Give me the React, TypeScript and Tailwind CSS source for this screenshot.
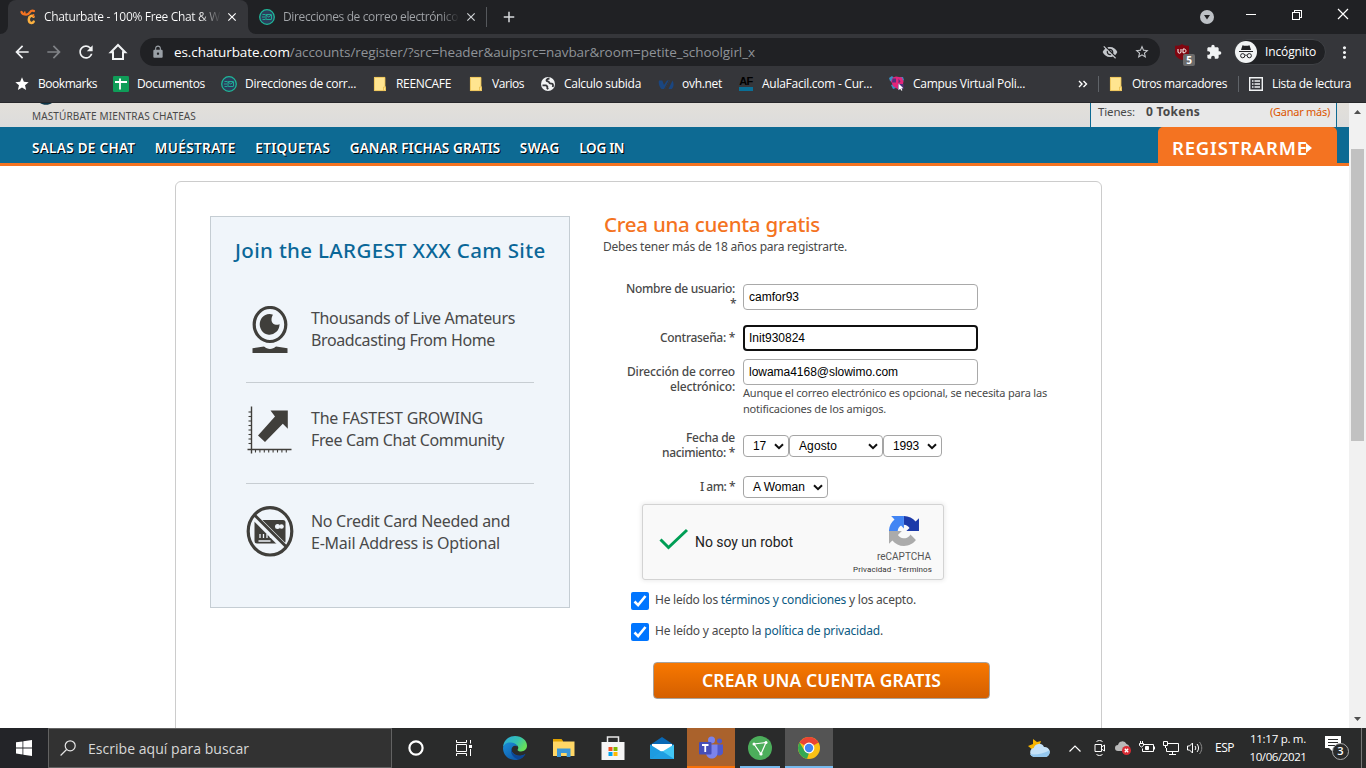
import { useLayoutEffect, useRef, useState, type ReactNode } from "react";
import {
  MdArrowBack,
  MdArrowForward,
  MdRefresh,
  MdLock,
  MdStar,
  MdStarBorder,
  MdExtension,
  MdMoreVert,
  MdVisibilityOff,
  MdClose,
  MdAdd,
} from "react-icons/md";

/* Single line of text whose tracking is adjusted so that it spans w pixels. */
function Fit({ w, className = "", children }: { w: number; className?: string; children: ReactNode }) {
  const ref = useRef<HTMLSpanElement>(null);
  const [spacing, setSpacing] = useState(0);
  useLayoutEffect(() => {
    const el = ref.current;
    if (!el) return;
    const natural = el.getBoundingClientRect().width;
    const count = (el.textContent || "").length;
    setSpacing((w - natural) / Math.max(count, 1));
  }, [w]);
  return (
    <span ref={ref} className={`inline-block shrink-0 whitespace-nowrap ${className}`} style={{ letterSpacing: `${spacing}px` }}>
      {children}
    </span>
  );
}

const UI = "font-['Open_Sans','Noto_Sans',sans-serif]";
const UB = "font-['Noto_Sans','Open_Sans',sans-serif]";

/* ---------- small drawings ---------- */

function MailLogo() {
  return (
    <svg className="block size-4 shrink-0" viewBox="0 0 16 16" fill="none">
      <circle cx="8" cy="8" r="7.3" fill="#2b3f5c" stroke="#1fb89a" strokeWidth="1.3" />
      <rect x="7" y="5.500" width="5.500" height="5" rx=".4" stroke="#1fb89a" strokeWidth=".9" />
      <path d="M7 6l2.700 2L12.300 6M3.500 5.500h3M3 8h3M3.500 10.500h3" stroke="#1fb89a" strokeWidth=".9" />
    </svg>
  );
}

function SiteLogo() {
  return (
    <svg className="block size-4 shrink-0" viewBox="0 0 16 16" fill="none">
      <path d="M1.500 3c.8 2.200 2.500 2.600 4.700 2.600C8 5.600 9 4.800 9.800 3.400 11 1.600 12.800 1.300 14 2" stroke="#f47321" strokeWidth="2.200" strokeLinecap="round" />
      <path d="M5 2.600c-.5 1.500-.3 2.500 0 3" stroke="#f47321" strokeWidth="1.600" />
      <path d="M13.500 7.800C12 6 9 6.800 8.800 10.300c-.1 4.200 3.700 4.500 4.900 2.300" stroke="#fbb040" strokeWidth="2.500" strokeLinecap="round" />
      <path d="M13.500 5v3.200" stroke="#f47321" strokeWidth="1.500" />
    </svg>
  );
}

function Folder() {
  return (
    <svg className="block size-4 shrink-0" viewBox="0 0 16 16">
      <path d="M2 1h11v9.500h1V15H2z" fill="#ffe590" />
      <path d="M2.400 15V1.400H13V10.500M11.500 14.600V11h2v3.600H2.500" fill="none" stroke="#e8bd4d" strokeWidth=".8" />
    </svg>
  );
}

function Sheets() {
  return (
    <svg className="block size-4 shrink-0" viewBox="0 0 16 16">
      <rect width="16" height="16" rx="1.200" fill="#0f9d58" />
      <path d="M2 6h12M7 2.500v11" stroke="#fff" strokeWidth="1.800" />
    </svg>
  );
}

function Globe() {
  return (
    <svg className="block size-4 shrink-0" viewBox="0 0 16 16">
      <circle cx="8" cy="8" r="7" fill="#f1f3f4" />
      <path d="M2.500 9.300h3.500l1.300 1.200v1.800l1 .9" fill="none" stroke="#35363a" strokeWidth="1.800" />
      <path d="M9.500 2.500c-2 .2-3.200 1-3 2 .2 1.300 2.500.6 2.700 2 .2 1.200 1.600 1 2.600 1.200 1.400.3 1.500 1.600.9 3.300" fill="none" stroke="#35363a" strokeWidth="1.800" />
    </svg>
  );
}

function Ovh() {
  return (
    <svg className="block size-4 shrink-0" viewBox="0 0 16 16">
      <path d="M1 4.500h3.300L6 9l3-4.500h3L7 13H3.500C1 10 .3 7 1 4.500zM10.500 13l4-8.500C16.300 8 15.700 11 13.800 13z" fill="#1a4680" />
      <path d="M6.500 13l4.600-8.500" stroke="#35363a" />
    </svg>
  );
}

function AulaFacil() {
  return (
    <div className="flex h-4 w-4 shrink-0 flex-col items-center">
      <span className="h-[10px] text-[11px] leading-[10px] font-bold tracking-[-0.5px] text-black font-['Liberation_Sans',sans-serif]">AF</span>
      <div className="mt-px h-1 w-[14px] bg-[#0a6f96]" />
    </div>
  );
}

function Campus() {
  return (
    <svg className="block size-4 shrink-0" viewBox="0 0 16 16">
      <path d="M0 2l3-2 2 2-2 4-2-1zM11 1l3 0 1 3-2 2zM2 9l3-1 2 4-3 1z" fill="#3b8fc4" />
      <path d="M4 1.500l3-1 6 1 1.500 4-1 5-5 2.500-4.500-3L2 5z" fill="#e2257b" />
      <path d="M3.500 2.500h3.500v4H3zM9.500 2.500l2 3-2 2zM9 8h5.500v4.500L9 14z" fill="#54307d" />
      <path d="M9.500 7.500v6.800l1.700-1.500 1.200 2 1-.6-1-2h2z" fill="#fff" />
    </svg>
  );
}

function WebcamIcon() {
  return (
    <svg className="block size-12" viewBox="0 0 48 48">
      <ellipse cx="24" cy="18.500" rx="15.800" ry="17" fill="none" stroke="#403f3b" strokeWidth="3.200" />
      <path d="M27 8.700A9.900 10.300 0 1 0 33.500 18c-2.600 2-7.700.4-8-3.800-.1-2.300.7-4.300 1.500-5.500z" fill="#403f3b" />
      <path d="M6.500 42.300L18 40.600c3.400 3.100 8.600 3.100 12 0l11.500 1.700V47h-35z" fill="#403f3b" />
    </svg>
  );
}

function GrowthIcon() {
  const ticks = [0, 1, 2, 3, 4, 5, 6, 7];
  return (
    <svg className="block size-12" viewBox="0 0 48 48">
      <path d="M5.500.5v47M1.500 43.500h44" stroke="#403f3b" strokeWidth="1.400" />
      {ticks.map((t) => (
        <g key={t} stroke="#403f3b" strokeWidth="1.100">
          <path d={`M2.500 ${6 + t * 4.500}h3`} />
          <path d={`M${9.500 + t * 4.400} 43.500v3`} />
        </g>
      ))}
      <path d="M12 29.500L29 10.500l-4.500-6h17.300v18.300l-5-5L19 36z" fill="#403f3b" />
    </svg>
  );
}

function NoCardIcon() {
  return (
    <svg className="-mt-px block h-[52px] w-12" viewBox="0 0 48 52">
      <rect x="8.500" y="15" width="31" height="23.500" rx="2.500" fill="#403f3b" />
      <circle cx="31.500" cy="21.500" r="2.500" fill="#f0f5fa" />
      <circle cx="35.500" cy="21.500" r="2.300" fill="#f0f5fa" />
      <path d="M14 29v4M17.500 29v4M21 29v4M24.500 31v2M12.500 36h12" stroke="#f0f5fa" strokeWidth="1.300" />
      <path d="M7 10.500l33 33" stroke="#f0f5fa" strokeWidth="6.800" />
      <path d="M8 9.500l32.500 32.500" stroke="#403f3b" strokeWidth="3" />
      <ellipse cx="24" cy="26.300" rx="21.800" ry="23.700" fill="none" stroke="#403f3b" strokeWidth="3.200" />
    </svg>
  );
}

function CaptchaLogo() {
  return (
    <svg className="block size-[30px]" viewBox="0 0 64 64">
      <path d="M64 31.950a33 33 0 0 0-.05-1.370V4.650l-7.170 7.170C50.920 4.640 41.990.05 31.990.05v18.610c4.970.39 9.270 3.130 11.810 7.110l-6.800 6.200z" fill="#1c3aa9" />
      <path d="M31.860.05c-.46.01-.92.02-1.370.05H4.560l7.170 7.170C4.550 13.130-.04 22.060-.04 32.060h18.600c.39-4.970 3.130-9.270 7.110-11.810l6.200 6.200z" fill="#4285f4" />
      <path d="M-.04 32.060c0 .46.020.92.050 1.370v25.930l7.170-7.170c5.860 7.180 14.790 11.770 24.790 11.770 10.400 0 19.640-4.960 25.480-12.640L45.700 39.450a15.570 15.570 0 0 1-4.760 5.340c-2.050 1.600-4.960 2.910-8.970 2.910-.48 0-.86-.06-1.130-.16-4.970-.39-9.270-3.130-11.810-7.110l8.310-8.310-27.380-.06" fill="#ababab" />
    </svg>
  );
}

/* ---------- browser chrome ---------- */

function TabStrip() {
  return (
    <div className="flex h-[34px] items-stretch bg-[#202124]">
      <div className="flex w-2 items-end bg-[#35363a]">
        <div className="h-full w-2 rounded-br-lg bg-[#202124]" />
      </div>
      <div className="flex w-[240px] items-center rounded-t-lg bg-[#35363a] pl-3">
        <SiteLogo />
        <div className="ml-2 flex w-[177px] overflow-hidden bg-linear-to-r from-white from-88% to-transparent bg-clip-text">
          <Fit w={176} className="text-[12px] leading-5 text-transparent">Chaturbate - 100% Free Chat &amp; W</Fit>
        </div>
        <MdClose className="ml-[4px] size-[14px] text-white" />
      </div>
      <div className="w-2 bg-[#35363a]">
        <div className="h-full w-2 rounded-bl-lg bg-[#202124]" />
      </div>
      <div className="flex items-center pl-[3px]">
        <MailLogo />
        <div className="ml-2 flex w-[177px] overflow-hidden bg-linear-to-r from-[#a3a6aa] from-88% to-transparent bg-clip-text">
          <Fit w={175} className="text-[12px] leading-5 text-transparent">Direcciones de correo electrónico</Fit>
        </div>
        <MdClose className="ml-[4px] size-[14px] text-[#d0d3d6]" />
        <div className="ml-[8px] h-5 w-px bg-[#55585c]" />
        <MdAdd className="ml-[13px] size-[18px] text-[#d8dadd]" />
      </div>
      <div className="mr-[8px] ml-auto flex items-center text-white">
        <svg className="mr-[31px] block size-4" viewBox="0 0 16 16">
          <circle cx="8" cy="8" r="7" fill="#bdc1c6" />
          <path d="M5 6h6l-3 4.500z" fill="#202124" />
        </svg>
        <svg className="mb-[6px] block h-[12px] w-[112px]" viewBox="0 0 112 12" fill="none" stroke="#fff" shapeRendering="crispEdges">
          <path d="M0 6.500h10" />
          <path d="M46.500 4.500h7v7h-7zM48.500 4V2.500h7v7H54" />
          <path d="M92 1l10 10M102 1L92 11" shapeRendering="auto" strokeWidth="1.200" />
        </svg>
      </div>
    </div>
  );
}

function Toolbar() {
  return (
    <div className="flex h-9 items-center bg-[#35363a] pl-3">
      <MdArrowBack className="size-5 text-[#f1f3f4]" />
      <MdArrowForward className="ml-3 size-5 text-[#808387]" />
      <MdRefresh className="ml-3 size-5 text-[#f1f3f4]" />
      <svg className="ml-3 block size-5" viewBox="0 0 20 20" fill="none" stroke="#f1f3f4" strokeWidth="2">
        <path d="M2.800 10.300H5V17h10v-6.700h2.200L10 3z" />
      </svg>
      <div className="ml-3 flex h-7 w-[1020px] items-center rounded-full bg-[#202124]">
        <MdLock className="ml-[11px] size-[14px] text-[#9aa0a6]" />
        <Fit w={581} className="ml-[9px] text-[13.500px] text-[#8f9398]">
          <span className="text-white">es.chaturbate.com</span>/accounts/register/?src=header&amp;auipsrc=navbar&amp;room=petite_schoolgirl_x
        </Fit>
        <MdVisibilityOff className="ml-auto size-4 text-[#c4c7cb]" />
        <MdStarBorder className="mr-[10px] ml-[16px] size-4 text-[#c4c7cb]" />
      </div>
      <div className="relative ml-[14px] size-4">
        <svg className="block size-4" viewBox="0 0 16 16">
          <path d="M8 0c2 1.500 4 1.800 7 1.800V9c0 3-3 5.500-7 7-4-1.500-7-4-7-7V1.800C4 1.800 6 1.500 8 0z" fill="#800610" />
          <path d="M4 5v3c0 1.600 3 1.600 3 0V5M9 5v3.800h1c2.600 0 2.600-3.800 0-3.800z" fill="none" stroke="#fff" />
        </svg>
        <span className="absolute top-[10px] left-[9px] flex h-[12px] w-3 items-center justify-center rounded-[2px] bg-[#6b6b6b] text-[10px] font-bold text-white">5</span>
      </div>
      <MdExtension className="ml-4 size-4 text-[#f1f3f4]" />
      <div className="ml-[12px] flex h-[26px] w-[92px] items-center rounded-full border border-[#3f4145] bg-[#202124]">
        <svg className="-ml-px block size-6" viewBox="0 0 24 24">
          <circle cx="12" cy="12" r="11" fill="#f1f3f4" />
          <path d="M8.500 5.200c2 .8 5 .8 7 0L17 10H7zM5 11h14v1H5z" fill="#202124" />
          <path d="M11 15.500c.6-.5 1.400-.5 2 0" stroke="#202124" fill="none" />
          <circle cx="8.700" cy="15.700" r="2.100" fill="none" stroke="#202124" />
          <circle cx="15.300" cy="15.700" r="2.100" fill="none" stroke="#202124" />
        </svg>
        <Fit w={51} className="ml-[7px] text-[12px] text-white">Incógnito</Fit>
      </div>
      <MdMoreVert className="ml-[9px] size-[19px] text-[#f1f3f4]" />
    </div>
  );
}

function Mark({ gap, icon, w, children }: { gap: string; icon: ReactNode; w: number; children: string }) {
  return (
    <div className={`flex shrink-0 items-center ${gap}`}>
      {icon}
      <Fit w={w} className="ml-2 text-[12px] leading-4">{children}</Fit>
    </div>
  );
}

function BookmarksBar() {
  return (
    <div className="flex h-8 items-center bg-[#35363a] pb-1 text-white">
      <Mark gap="ml-[14px]" icon={<MdStar className="size-4" />} w={59}>Bookmarks</Mark>
      <Mark gap="ml-4" icon={<Sheets />} w={68}>Documentos</Mark>
      <Mark gap="ml-4" icon={<MailLogo />} w={111}>Direcciones de corr...</Mark>
      <Mark gap="ml-4" icon={<Folder />} w={55}>REENCAFE</Mark>
      <Mark gap="ml-[17px]" icon={<Folder />} w={32}>Varios</Mark>
      <Mark gap="ml-4" icon={<Globe />} w={77}>Calculo subida</Mark>
      <Mark gap="ml-[17px]" icon={<Ovh />} w={40}>ovh.net</Mark>
      <Mark gap="ml-4" icon={<AulaFacil />} w={110}>AulaFacil.com - Cur...</Mark>
      <Mark gap="ml-[17px]" icon={<Campus />} w={112}>Campus Virtual Poli...</Mark>
      <svg className="ml-auto block h-2 w-[10px]" viewBox="0 0 10 8" fill="none" stroke="#fff" strokeWidth="1.400">
        <path d="M1 1l3 3-3 3M5.500 1l3 3-3 3" />
      </svg>
      <div className="ml-[10px] h-4 w-px bg-[#5f6368]" />
      <Mark gap="ml-[9px]" icon={<Folder />} w={95}>Otros marcadores</Mark>
      <div className="ml-[11px] h-4 w-px bg-[#5f6368]" />
      <Mark
        gap="ml-[9px] mr-[15px]"
        w={79}
        icon={
          <svg className="block size-4" viewBox="0 0 16 16" fill="none" stroke="#f1f3f4">
            <path d="M1.700 1.700h12.600v12.600H1.700z" strokeWidth="1.400" />
            <path d="M4 5h1.500M4 8h1.500M4 11h1.500M6.500 5H12M6.500 8H12M6.500 11H12" strokeWidth="1.500" />
          </svg>
        }
      >
        Lista de lectura
      </Mark>
    </div>
  );
}

/* ---------- page ---------- */

function SiteHeader() {
  return (
    <header>
      <div className="flex h-6 bg-linear-to-b from-[#e3e0da] to-[#dcdcdc] pl-8">
        <div className="flex w-[170px] flex-col items-start">
          <svg className="ml-[6px] block h-[2px] w-4" viewBox="0 0 16 2">
            <path d="M2 0h12c-3 2.400-9 2.400-12 0z" fill="#0c3547" />
          </svg>
          <Fit w={164} className="mt-[2px] text-[10px] leading-[19px] text-[#494949]">MASTÚRBATE MIENTRAS CHATEAS</Fit>
        </div>
        <div className="mr-3 ml-auto flex w-[247px] border-x border-[#0d6a93] bg-[#e8e8e8] pl-[7px] leading-[18px] text-[#494949]">
          <Fit w={37} className="text-[11.500px]">Tienes:</Fit>
          <Fit w={54} className="ml-[11px] text-[12px] font-bold">0 Tokens</Fit>
          <Fit w={60} className="mr-[6px] ml-auto text-[11px] text-[#dc5500]">(Ganar más)</Fit>
        </div>
      </div>
      <div className="flex h-[39px] border-b-3 border-[#f47321] bg-[#0d6a93] pl-8">
        <nav className="flex gap-[19.500px] pt-[11px] text-[13.500px] leading-5 font-semibold text-white [text-shadow:1px_1px_0_#000]">
          <Fit w={103.3}>SALAS DE CHAT</Fit>
          <Fit w={81}>MUÉSTRATE</Fit>
          <Fit w={75}>ETIQUETAS</Fit>
          <Fit w={150.5}>GANAR FICHAS GRATIS</Fit>
          <Fit w={40}>SWAG</Fit>
          <Fit w={45}>LOG IN</Fit>
        </nav>
        <div className="mr-3 ml-auto flex w-[179px] items-center rounded-t-[5px] bg-[#f47321] pt-[6px] pl-[14px] text-white">
          <Fit w={136} className="text-[18.500px] leading-6 font-semibold">REGISTRARME</Fit>
          <svg className="-ml-[2px] block h-[10px] w-[6px]" viewBox="0 0 6 10">
            <path d="M0 0l6 5-6 5z" fill="#fff" />
          </svg>
        </div>
      </div>
    </header>
  );
}

function Feature({ icon, lines, last, className = "" }: { icon: ReactNode; lines: [string, number][]; last?: boolean; className?: string }) {
  return (
    <div className={`flex items-start ${last ? "" : "border-b border-[#c7cdd2]"} ${className}`}>
      {icon}
      <div className={`ml-[17px] flex flex-col text-[16px] leading-[22px] text-[#494949] ${last ? "pt-1" : "pt-px"}`}>
        {lines.map(([text, w]) => (
          <div key={text} className="flex">
            <Fit w={w}>{text}</Fit>
          </div>
        ))}
      </div>
    </div>
  );
}

function Promo() {
  return (
    <aside className="mt-[34px] h-[392px] w-[360px] border border-[#c5cdd3] bg-[#f0f5fa] px-[35px] pt-[19px]">
      <div className="-ml-[11px] flex">
        <Fit w={310.5} className="text-[20.500px] leading-7 font-medium text-[#0a6798]">Join the LARGEST XXX Cam Site</Fit>
      </div>
      <Feature className="mt-[42px] h-[77px]" icon={<WebcamIcon />} lines={[["Thousands of Live Amateurs", 204], ["Broadcasting From Home", 184]]} />
      <Feature className="mt-[23px] h-[78px]" icon={<GrowthIcon />} lines={[["The FASTEST GROWING", 172], ["Free Cam Chat Community", 193]]} />
      <Feature className="mt-[22px]" last icon={<NoCardIcon />} lines={[["No Credit Card Needed and", 199], ["E-Mail Address is Optional", 189]]} />
    </aside>
  );
}

function Label({ lines, className = "" }: { lines: [string, number][]; className?: string }) {
  return (
    <div className={`flex w-[132px] shrink-0 flex-col items-end text-[12px] leading-[15px] font-medium text-[#494949] ${className}`}>
      {lines.map(([text, w]) => (
        <Fit key={text} w={w}>{text}</Fit>
      ))}
    </div>
  );
}

function Field({ value, w, focused }: { value: string; w: number; focused?: boolean }) {
  return (
    <div className={`flex h-[26px] w-[235px] items-center rounded-[4px] bg-white text-[12px] text-black font-['Liberation_Sans',Arial,sans-serif] ${focused ? "border-2 border-[#101010] pl-[4px]" : "border border-[#a9a9a9] pl-[5px]"}`}>
      <Fit w={w}>{value}</Fit>
    </div>
  );
}

function Picker({ value, w, className }: { value: string; w: number; className: string }) {
  return (
    <div className={`flex h-[22px] items-center rounded-[4px] border border-[#a5a5a5] bg-white pr-1 pl-[9px] text-[12px] text-black font-['Liberation_Sans',Arial,sans-serif] ${className}`}>
      <Fit w={w}>{value}</Fit>
      <svg className="ml-auto block h-[7px] w-[10px]" viewBox="0 0 10 7">
        <path d="M1 1.200l4 4 4-4" fill="none" stroke="#101010" strokeWidth="2" />
      </svg>
    </div>
  );
}

function Check({ className, w, children }: { className: string; w: number; children: ReactNode }) {
  return (
    <div className={`ml-7 flex h-[18px] items-start ${className}`}>
      <svg className="block size-[18px]" viewBox="0 0 18 18">
        <rect width="18" height="18" rx="2" fill="#0075ff" />
        <path d="M3.500 9.500l3.600 3.600L14.500 4" fill="none" stroke="#fff" strokeWidth="2.600" />
      </svg>
      <Fit w={w} className="ml-[6px] text-[12px] leading-4 text-[#494949]">{children}</Fit>
    </div>
  );
}

function Captcha() {
  return (
    <div className="mt-[6px] ml-[39px] flex h-[76px] w-[302px] rounded-[3px] border border-[#d3d3d3] bg-[#f9f9f9] shadow-[0_0_4px_1px_rgba(0,0,0,0.08)] font-['Roboto',sans-serif]">
      <svg className="mt-[23px] ml-[16px] block h-[22px] w-[30px]" viewBox="0 0 30 22">
        <path d="M1.500 11.500l8 8L28 2" fill="none" stroke="#009e55" strokeWidth="3" />
      </svg>
      <Fit w={98} className="ml-[6px] self-center text-[14px] text-[#222]">No soy un robot</Fit>
      <div className="mr-3 ml-auto flex flex-col items-end pt-[11px] text-[#555]">
        <div className="mr-3">
          <CaptchaLogo />
        </div>
        <Fit w={54} className="mt-[5px] text-[10px] leading-3">reCAPTCHA</Fit>
        <Fit w={79} className="mt-[2px] -mr-px text-[8px] leading-[10px] text-[#333]">Privacidad - Términos</Fit>
      </div>
    </div>
  );
}

function SignUp() {
  return (
    <form className="mt-[28px] ml-[33px] w-[464px]">
      <div className="ml-px flex">
        <Fit w={216} className="text-[20.500px] leading-7 font-medium text-[#f47321]">Crea una cuenta gratis</Fit>
      </div>
      <div className="mt-px flex">
        <Fit w={244} className="text-[12px] leading-4 text-[#494949]">Debes tener más de 18 años para registrarte.</Fit>
      </div>
      <div className="mt-[26px] flex h-[44px] gap-2">
        <Label lines={[["Nombre de usuario:", 109], ["*", 5]]} />
        <div className="pt-[3px]">
          <Field value="camfor93" w={50} />
        </div>
      </div>
      <div className="flex h-[34px] gap-2">
        <Label className="pt-[5px]" lines={[["Contraseña: *", 75]]} />
        <Field value="Init930824" w={56} focused />
      </div>
      <div className="flex h-[77px] gap-2">
        <Label className="pt-[5px]" lines={[["Dirección de correo", 108], ["electrónico:", 65]]} />
        <div>
          <Field value="lowama4168@slowimo.com" w={149} />
          <div className="flex flex-col items-start text-[11px] leading-4 text-[#494949]">
            <Fit w={304}>Aunque el correo electrónico es opcional, se necesita para las</Fit>
            <Fit w={143}>notificaciones de los amigos.</Fit>
          </div>
        </div>
      </div>
      <div className="flex h-10 gap-2">
        <Label className="-mt-[6px]" lines={[["Fecha de", 49], ["nacimiento: *", 73]]} />
        <div className="-mt-px flex">
          <Picker className="w-[46px]" value="17" w={13} />
          <Picker className="w-[94px]" value="Agosto" w={38} />
          <Picker className="w-[59px]" value="1993" w={26} />
        </div>
      </div>
      <div className="flex h-[22px] gap-2">
        <Label className="pt-[3px]" lines={[["I am: *", 35]]} />
        <Picker className="w-[85px]" value="A Woman" w={52} />
      </div>
      <Captcha />
      <Check className="mt-3" w={261}>
        He leído los <a className="text-[#0a5a83]">términos y condiciones</a> y los acepto.
      </Check>
      <Check className="mt-[13px]" w={228}>
        He leído y acepto la <a className="text-[#0a5a83]">política de privacidad</a>.
      </Check>
      <div className="mt-[21px] ml-[50px] flex h-[37px] w-[337px] items-center justify-center rounded-[4px] border border-[#a8a29c] bg-linear-to-b from-[#f87800] to-[#d45f00] text-white">
        <Fit w={239} className="text-[17.500px] font-semibold">CREAR UNA CUENTA GRATIS</Fit>
      </div>
    </form>
  );
}

function Scrollbar() {
  return (
    <div className="flex w-[17px] shrink-0 flex-col items-center bg-[#f1f1f1]">
      <svg className="mt-[7px] block h-[4px] w-[7px]" viewBox="0 0 7 4"><path d="M0 4l3.500-4L7 4z" fill="#505050" /></svg>
      <div className="mt-[35px] h-[292px] w-[13px] bg-[#c1c1c1]" />
      <svg className="mt-auto mb-[7px] block h-[4px] w-[7px]" viewBox="0 0 7 4"><path d="M0 0l3.500 4L7 0z" fill="#505050" /></svg>
    </div>
  );
}

/* ---------- taskbar ---------- */

function TaskSlot({ className = "", bar = "", children }: { className?: string; bar?: string; children: ReactNode }) {
  return (
    <div className={`flex h-10 w-12 flex-col items-center ${className}`}>
      <div className="flex h-[38px] items-center pt-[2px]">{children}</div>
      <div className={`h-[2px] ${bar}`} />
    </div>
  );
}

function Taskbar() {
  return (
    <footer className="flex h-10 bg-[#2a2b2b]">
      <div className="flex w-12 items-center justify-center bg-[#232428]">
        <svg className="block size-4" viewBox="0 0 16 16" fill="#fff">
          <path d="M0 2.300L6.500 1.400v6.100H0zM7.300 1.300L16 0v7.500H7.300zM0 8.400h6.500v6.100L0 13.600zM7.300 8.400H16V16l-8.700-1.300z" />
        </svg>
      </div>
      <div className="flex w-[344px] items-center border border-[#626262] bg-[#323232] pl-[11px]">
        <svg className="block size-4" viewBox="0 0 16 16" fill="none" stroke="#e6e6e6" strokeWidth="1.200">
          <circle cx="10.200" cy="5.800" r="5" />
          <path d="M6.600 9.500L.6 15.500" />
        </svg>
        <Fit w={161} className="ml-3 text-[14px] text-[#d8d8d8]">Escribe aquí para buscar</Fit>
      </div>
      <TaskSlot>
        <svg className="block size-4" viewBox="0 0 16 16"><circle cx="8" cy="8" r="6.600" fill="none" stroke="#fff" strokeWidth="2.200" /></svg>
      </TaskSlot>
      <TaskSlot>
        <svg className="block size-4" viewBox="0 0 16 16" fill="none" stroke="#fff">
          <path d="M.5 0v2.500h10V0M.5 4.500h10v7H.5zM.5 16v-2.500h10V16M14.500 0v3.500M14.500 9v7" />
          <path d="M13 5h3v3h-3z" fill="#fff" stroke="none" />
        </svg>
      </TaskSlot>
      <TaskSlot className="ml-[3px]">
        <svg className="block size-6" viewBox="0 0 24 24">
          <defs>
            <linearGradient id="edgeTop" x1="0" y1="0" x2="1" y2=".5"><stop offset="0" stopColor="#2aa9e0" /><stop offset=".6" stopColor="#35c1b0" /><stop offset="1" stopColor="#66e05a" /></linearGradient>
            <linearGradient id="edgeLow" x1="0" y1="0" x2="1" y2="1"><stop offset="0" stopColor="#1b8fd8" /><stop offset="1" stopColor="#0b4a9c" /></linearGradient>
          </defs>
          <path d="M0 12C0 5 5 0 12 0s12 4.500 12 9.800c0 3.300-2.600 5.700-6 5.700-2.300 0-4-.9-3.300-2C16.500 11 14 8 10 8 5 7.800 0 9 0 12z" fill="url(#edgeTop)" />
          <path d="M0 12c.5-4.500 5-6 8.500-5.500C12 7 14 8.800 14.500 10.500 10 8 7 13 9.500 16.500s8 4.500 13 1.200C20.500 21.500 16.700 24 12 24 5.500 24 0 19 0 12z" fill="url(#edgeLow)" />
          <path d="M8.800 11.500c-2.300 4.500.7 10.500 7.200 12 3-1 5.300-3.200 6.500-5.800-5 3.300-10.300 2.300-13-1.200-1-1.300-1.200-3.300-.7-5z" fill="#0c4595" />
        </svg>
      </TaskSlot>
      <TaskSlot className="ml-px">
        <svg className="block h-[20px] w-[22px]" viewBox="0 0 22 20">
          <path d="M0 1h8.500l1.500 2v3H0z" fill="#e0a200" />
          <path d="M0 3.500h21.500V18H0z" fill="#ffd766" />
          <path d="M4 10.500h13.500V19h-3.800v-4H8v4H4z" fill="#3b97d8" />
        </svg>
      </TaskSlot>
      <TaskSlot className="ml-px">
        <svg className="block h-6 w-6" viewBox="0 0 24 24">
          <path d="M6.500 7V1h11v6" fill="none" stroke="#e8e8e8" strokeWidth="1.500" />
          <path d="M.5 6h23v18H.5z" fill="#f5f5f5" />
          <path d="M7.500 11h4v4h-4z" fill="#f25022" /><path d="M12.500 11h4v4h-4z" fill="#7fba00" />
          <path d="M7.500 16h4v4h-4z" fill="#00a4ef" /><path d="M12.500 16h4v4h-4z" fill="#ffb900" />
        </svg>
      </TaskSlot>
      <TaskSlot className="ml-px">
        <svg className="block size-6" viewBox="0 0 24 24">
          <path d="M0 9L12 1l12 8v4H0z" fill="#0868b5" /><path d="M2 8h20v8H2z" fill="#fff" />
          <path d="M0 8.500l12 7.500L0 23z" fill="#1d9be0" /><path d="M24 8.500V23H0z" fill="#42c6f4" />
          <path d="M0 23l12-8 12 8z" fill="#1f9ee2" />
        </svg>
      </TaskSlot>
      <TaskSlot className="ml-px bg-[#aa622c]" bar="w-12 bg-[#f77008]">
        <svg className="block size-6" viewBox="0 0 24 24">
          <circle cx="12.500" cy="4" r="3.500" fill="#7b83eb" /><circle cx="20.500" cy="5" r="2.500" fill="#5059c9" />
          <path d="M18 8.500h6V16c0 3-3 4.500-6 3z" fill="#5059c9" /><path d="M7 8.500h11.500v8c0 8-11.500 8-11.500 0z" fill="#7b83eb" />
          <rect y="6" width="12.500" height="12.500" rx="1" fill="#464eb8" />
          <path d="M3 9h6.500M6.250 9v7" stroke="#fff" strokeWidth="1.800" />
        </svg>
      </TaskSlot>
      <TaskSlot bar="w-10 bg-[#76b9ed]" className="ml-px">
        <svg className="block size-6" viewBox="0 0 24 24">
          <circle cx="12" cy="12" r="12" fill="#4cae5b" />
          <path d="M6 8l12-1.500-5 11.500z" fill="none" stroke="#fff" strokeWidth="1.200" />
          <circle cx="6" cy="8" r="1.500" fill="#fff" /><circle cx="18" cy="6.500" r="1.500" fill="#fff" /><circle cx="13" cy="18" r="1.600" fill="#fff" />
        </svg>
      </TaskSlot>
      <TaskSlot className="ml-px bg-[#545454]" bar="w-12 bg-[#76b9ed]">
        <svg className="block size-6" viewBox="0 0 24 24">
          <circle cx="12" cy="12" r="11" fill="#fbc116" />
          <path d="M12 12L2.500 6.500a11 11 0 0 1 19 0z" fill="#ea4335" />
          <path d="M2.500 6.500L8 15.500l4 1.500-2 5.800A11 11 0 0 1 2.500 6.500z" fill="#34a853" />
          <path d="M12 6.500h9.500" stroke="#ea4335" />
          <circle cx="12" cy="12" r="5.400" fill="#fff" /><circle cx="12" cy="12" r="4.200" fill="#4285f4" />
        </svg>
      </TaskSlot>
      <div className="ml-auto flex items-center text-white">
        <svg className="mr-[19px] block h-5 w-[22px]" viewBox="0 0 22 20">
          <path d="M0 8l5-2V1l4 3 4-1-2 6-5 4z" fill="#f7b500" />
          <path d="M6 19a4.600 4.600 0 0 1-.3-9 5.500 5.500 0 0 1 10.300-1 5 5 0 0 1 1.500 10z" fill="#c5e2f8" />
          <path d="M6 19a4.600 4.600 0 0 1-4-3c5 1.300 12 0 19.500-3.500.3 4-1.500 6.500-4 6.500z" fill="#95c8ef" />
        </svg>
        <svg className="mr-[13px] block h-[7px] w-3" viewBox="0 0 12 7"><path d="M.5 6.500L6 1l5.500 5.500" fill="none" stroke="#fff" strokeWidth="1.200" /></svg>
        <svg className="mr-[9px] block h-4 w-[12px]" viewBox="0 0 12 16" fill="none" stroke="#fff">
          <path d="M1 4.500h6.500v7H1zM7.500 7l3-2v6l-3-2M2.500 1.500c2-1.300 4-1.300 6 0M2.500 14.500c2 1.300 4 1.300 6 0" />
        </svg>
        <svg className="mr-[8px] block h-4 w-[16px]" viewBox="0 0 16 16">
          <path d="M3 11a3 3 0 0 1 0-6 4.500 4.500 0 0 1 8.500-1A4 4 0 0 1 13 11z" fill="#b9b9b9" />
          <circle cx="11.500" cy="10.500" r="4.500" fill="#d92c35" />
          <path d="M9.800 8.800l3.400 3.400M13.200 8.800l-3.400 3.400" stroke="#fff" strokeWidth="1.300" />
        </svg>
        <svg className="mr-[8px] block h-4 w-[16px]" viewBox="0 0 16 16" fill="none" stroke="#fff">
          <path d="M5 4.500h9.500v7H3.500V8.500M15.500 6.500v3M.5 3.500h4v2L2.500 7 .5 5.500zM1.500 1v2M3.500 1v2" />
          <path d="M6.500 6.500h3v3h-3z" fill="#fff" />
        </svg>
        <svg className="mr-[8px] block h-4 w-[16px]" viewBox="0 0 16 16" fill="none" stroke="#fff">
          <path d="M5 3.500h10.500v8h-12V8M9.500 11.500v3M6 14.500h7M.5 1.500h4v4h-4zM2.500 5.500V8" />
        </svg>
        <svg className="mr-[12px] block h-4 w-[16px]" viewBox="0 0 16 16" fill="none" stroke="#fff">
          <path d="M.5 6h2l3-3v10l-3-3h-2zM8 6c1 1.300 1 2.700 0 4M10 4c2 2.500 2 5.500 0 8" />
          <path d="M12.500 2c3 4 3 8 0 12" stroke="#888" />
        </svg>
        <Fit w={19} className="text-[12px]">ESP</Fit>
        <div className="ml-[15px] flex w-[58px] flex-col items-center text-[11.500px] leading-[18px]">
          <Fit w={56}>11:17 p. m.</Fit>
          <Fit w={57}>10/06/2021</Fit>
        </div>
        <div className="relative mr-[10px] ml-[18px] h-6 w-[26px]">
          <svg className="block h-4 w-4" viewBox="0 0 16 16">
            <path d="M0 0h16v12H8v4l-4-4H0z" fill="#fff" />
            <path d="M3 3.500h10M3 6.500h10M3 9.500h7" stroke="#2a2b2b" />
          </svg>
          <span className="absolute top-[7px] left-[7px] flex size-[17px] items-center justify-center rounded-full border border-[#aaa] bg-[#2a2b2b] text-[11px] font-semibold">3</span>
        </div>
        <div className="mr-[4px] h-10 w-px bg-[#777]" />
      </div>
    </footer>
  );
}

export default function App() {
  return (
    <div className={`flex h-[768px] w-[1366px] flex-col overflow-hidden ${UI}`}>
      <TabStrip />
      <Toolbar />
      <BookmarksBar />
      <div className="h-px bg-[#27282b]" />
      <div className={`flex h-[625px] bg-white ${UB}`}>
        <div className="flex w-[1349px] flex-col overflow-hidden">
          <SiteHeader />
          <main className="mt-[15px] ml-[175px] flex h-[560px] w-[927px] shrink-0 rounded-t-[6px] border border-[#ccc] pl-[34px]">
            <Promo />
            <SignUp />
          </main>
        </div>
        <Scrollbar />
      </div>
      <Taskbar />
    </div>
  );
}
